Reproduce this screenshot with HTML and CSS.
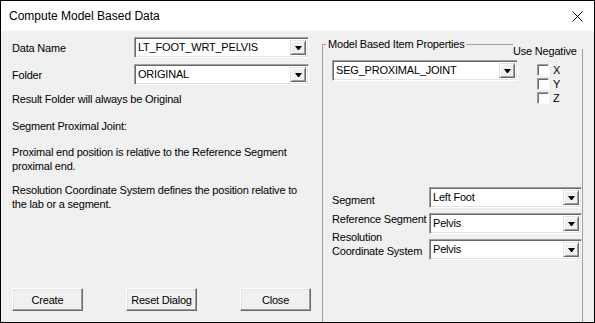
FILE: index.html
```html
<!DOCTYPE html>
<html>
	<head>
		<meta charset="UTF-8">
		<title>Compute Model Based Data</title>
		<link rel="stylesheet" href="styles.css">
	</head>
	<body>
		<div class="window">
			<div class="titlebar">
				<span class="title">Compute Model Based Data</span>
				<svg class="close" width="11" height="11" viewBox="0 0 11 11">
					<path d="M0.5 0.5 L10.5 10.5 M10.5 0.5 L0.5 10.5" stroke="#000" stroke-width="1" fill="none"/>
				</svg>
			</div>
			<div class="client">
				<div class="left">
					<div class="form">
						<span class="label">Data Name</span>
						<div class="combo"><span class="value">LT_FOOT_WRT_PELVIS</span><span class="drop"></span></div>
						<span class="label">Folder</span>
						<div class="combo"><span class="value">ORIGINAL</span><span class="drop"></span></div>
					</div>
					<p class="note n1">Result Folder will always be Original</p>
					<p class="note n2">Segment Proximal Joint:</p>
					<p class="note n3">Proximal end position is relative to the Reference Segment<br>proximal end.</p>
					<p class="note n4">Resolution Coordinate System defines the position relative to<br>the lab or a segment.</p>
					<div class="buttons">
						<button class="btn">Create</button>
						<button class="btn">Reset Dialog</button>
						<button class="btn">Close</button>
					</div>
				</div>
				<div class="group">
					<span class="legend">Model Based Item Properties</span>
					<span class="negative">Use Negative</span>
					<div class="top-row">
						<div class="combo seg"><span class="value">SEG_PROXIMAL_JOINT</span><span class="drop"></span></div>
						<div class="checks">
							<div class="check"><span class="box"></span>X</div>
							<div class="check"><span class="box"></span>Y</div>
							<div class="check"><span class="box"></span>Z</div>
						</div>
					</div>
					<div class="form props">
						<span class="label l-seg">Segment</span>
						<div class="combo"><span class="value">Left Foot</span><span class="drop"></span></div>
						<span class="label l-ref">Reference Segment</span>
						<div class="combo"><span class="value">Pelvis</span><span class="drop"></span></div>
						<span class="label l-res">Resolution<br>Coordinate System</span>
						<div class="combo"><span class="value">Pelvis</span><span class="drop"></span></div>
					</div>
				</div>
			</div>
		</div>
	</body>
</html>
```

FILE: styles.css
```css
body {
	margin: 0;
	font: 11px/14px "Liberation Sans", Arial, sans-serif;
	letter-spacing: -0.2px;
	color: #000;
}

.window {
	width: 595px;
	height: 323px;
	box-sizing: border-box;
	border: 1px solid #000;
	background: #f0f0f0;
	overflow: hidden;
	display: flex;
	flex-direction: column;
}

.titlebar {
	height: 30px;
	background: #fff;
	display: flex;
	align-items: center;
	justify-content: space-between;
	padding: 0 11px 0 8px;
	flex-shrink: 0;
}

.titlebar .title {
	font: 12px "Liberation Sans", Arial, sans-serif;
	letter-spacing: 0;
	margin-top: -1px;
}

.client {
	flex: 1;
	display: flex;
	min-height: 0;
}

.left {
	width: 310px;
	padding: 6px 0 11px 11px;
	display: flex;
	flex-direction: column;
}

.form {
	display: grid;
	grid-template-columns: 122px 175px;
	row-gap: 6px;
	align-items: center;
}

.label {
	white-space: nowrap;
}

.combo {
	display: flex;
	height: 21px;
	box-sizing: border-box;
	border: 1px solid;
	border-color: #a0a0a0 #fff #fff #a0a0a0;
	box-shadow: inset 1px 1px #696969, inset -1px -1px #e3e3e3;
	background: #fff;
	padding: 2px;
}

.combo .value {
	flex: 1;
	padding-left: 1px;
	line-height: 15px;
	white-space: nowrap;
	overflow: hidden;
}

.combo .drop {
	width: 16px;
	box-sizing: border-box;
	background: #f0f0f0;
	border: 1px solid;
	border-color: #e3e3e3 #696969 #696969 #e3e3e3;
	box-shadow: inset 1px 1px #fff, inset -1px -1px #a0a0a0;
	display: flex;
	align-items: center;
	justify-content: center;
}

.combo .drop::after {
	content: "";
	width: 1px;
	height: 0;
	border-left: 3px solid transparent;
	border-right: 3px solid transparent;
	border-top: 4px solid #000;
	margin-left: 1px;
}

.note {
	margin: 0;
	white-space: nowrap;
}

.n1 { margin-top: 7px; }
.n2 { margin-top: 13px; }
.n3 { margin-top: 12px; }
.n4 { margin-top: 10px; }

.buttons {
	margin-top: auto;
	display: flex;
	gap: 43px;
}

.btn {
	width: 71px;
	height: 23px;
	box-sizing: border-box;
	background: #f0f0f0;
	border: 1px solid;
	border-color: #fff #696969 #696969 #fff;
	box-shadow: inset -1px -1px #a0a0a0, inset 1px 1px #e3e3e3;
	font: inherit;
	letter-spacing: inherit;
	color: #000;
	padding: 0;
	white-space: nowrap;
}

.group {
	position: relative;
	box-sizing: border-box;
	width: 261px;
	margin-top: 13px;
	border: 1px solid #a0a0a0;
	border-bottom: none;
	padding: 15px 0 0 9px;
}

.legend {
	position: absolute;
	top: -8px;
	left: 3px;
	padding: 0 2px;
	background: #f0f0f0;
	white-space: nowrap;
}

.negative {
	position: absolute;
	top: -1px;
	right: -1px;
	width: 70px;
	height: 5px;
	background: #f0f0f0;
	line-height: 14px;
	white-space: nowrap;
}

.top-row {
	display: flex;
	align-items: flex-start;
}

.combo.seg {
	width: 186px;
}

.checks {
	margin: 3px 0 0 19px;
	display: flex;
	flex-direction: column;
}

.check {
	display: flex;
	align-items: center;
	height: 14px;
	gap: 4px;
}

.check .box {
	width: 12px;
	height: 12px;
	box-sizing: border-box;
	border: 1px solid;
	border-color: #a0a0a0 #fff #fff #a0a0a0;
	box-shadow: inset 1px 1px #696969;
	background: #fff;
}

.props {
	grid-template-columns: 97px 153px;
	row-gap: 5px;
	margin-top: 82px;
	align-items: start;
}

.l-seg { margin-top: 6px; }
.l-ref { margin-top: -1px; }
.l-res { margin-top: -9px; }
```
